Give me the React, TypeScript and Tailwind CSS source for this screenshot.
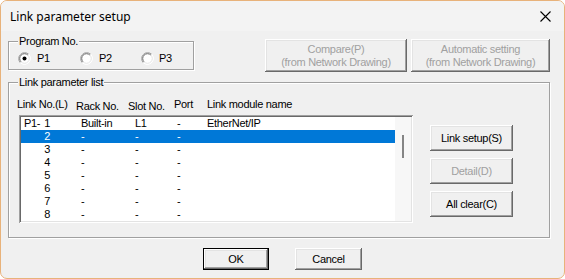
import React from "react";

const btn =
  "bg-[#f0f0f0] shadow-[inset_-1px_-1px_#696969,inset_1px_1px_#ffffff,inset_-2px_-2px_#a0a0a0,inset_2px_2px_#e3e3e3] flex flex-col items-center justify-center text-[11px] leading-[13px]";

function Radio({ checked }: { checked?: boolean }) {
  return (
    <svg width="13" height="13" viewBox="0 0 13 13">
      <circle cx="6.5" cy="6.5" r="6" fill="#ffffff" />
      <path d="M2.26 10.74 A6 6 0 0 1 10.74 2.26" stroke="#a0a0a0" strokeWidth="1" fill="none" />
      <path d="M3.1 9.9 A4.8 4.8 0 0 1 9.9 3.1" stroke="#696969" strokeWidth="1" fill="none" />
      <path d="M10.74 2.26 A6 6 0 0 1 2.26 10.74" stroke="#ffffff" strokeWidth="1" fill="none" />
      <path d="M9.9 3.1 A4.8 4.8 0 0 1 3.1 9.9" stroke="#e3e3e3" strokeWidth="1" fill="none" />
      {checked && <circle cx="6.5" cy="6.5" r="2" fill="#000" />}
    </svg>
  );
}

const rows = [
  { n: "1", p: "P1-", rack: "Built-in", slot: "L1", port: "-", name: "EtherNet/IP" },
  { n: "2", rack: "-", slot: "-", port: "-", name: "" },
  { n: "3", rack: "-", slot: "-", port: "-", name: "" },
  { n: "4", rack: "-", slot: "-", port: "-", name: "" },
  { n: "5", rack: "-", slot: "-", port: "-", name: "" },
  { n: "6", rack: "-", slot: "-", port: "-", name: "" },
  { n: "7", rack: "-", slot: "-", port: "-", name: "" },
  { n: "8", rack: "-", slot: "-", port: "-", name: "" },
];

export default function App() {
  return (
    <div className="w-[565px] h-[279px] border border-[#e8b27a] rounded-[7px] bg-[#f0f0f0] overflow-hidden flex flex-col font-['Liberation_Sans',Arial,sans-serif] text-black">
      {/* Title bar */}
      <div className="h-[30px] shrink-0 bg-[#f3f3f3] flex items-center justify-between pl-[9px] pr-[13px]">
        <span className="text-[12px] font-['Noto_Sans',sans-serif] pt-[1px]">Link parameter setup</span>
        <svg width="11" height="11" viewBox="0 0 11 11">
          <path d="M0.5 0.5 L10.5 10.5 M10.5 0.5 L0.5 10.5" stroke="#000" strokeWidth="1.1" />
        </svg>
      </div>

      {/* Body */}
      <div className="flex-1 flex flex-col pl-[7px] text-[11px] leading-[13px] tracking-[-0.3px]">
        {/* Row 1 */}
        <div className="flex items-start mt-[8px]">
          <div className="relative mt-[2px] w-[186px] h-[29px] border border-[#a0a0a0] shadow-[1px_1px_#ffffff,inset_1px_1px_#ffffff]">
            <span className="absolute -top-[7px] left-[9px] px-[1px] bg-[#f0f0f0]">Program No.</span>
            <div className="flex items-center h-full pt-[6px] pl-[9px]">
              <div className="flex items-center w-[62px]">
                <Radio checked />
                <span className="ml-[6px]">P1</span>
              </div>
              <div className="flex items-center w-[61px]">
                <Radio />
                <span className="ml-[6px]">P2</span>
              </div>
              <div className="flex items-center">
                <Radio />
                <span className="ml-[5px]">P3</span>
              </div>
            </div>
          </div>
          <div className={`${btn} ml-[71px] w-[142px] h-[33px] text-[#a0a0a0]`}>
            <span>Compare(P)</span>
            <span>(from Network Drawing)</span>
          </div>
          <div className={`${btn} ml-[4px] w-[139px] h-[33px] text-[#a0a0a0]`}>
            <span>Automatic setting</span>
            <span>(from Network Drawing)</span>
          </div>
        </div>

        {/* Link parameter list group */}
        <div className="relative mt-[10px] w-[542px] h-[156px] border border-[#a0a0a0] shadow-[1px_1px_#ffffff,inset_1px_1px_#ffffff] pt-[15px] pl-[10px]">
          <span className="absolute -top-[7px] left-[9px] px-[1px] bg-[#f0f0f0]">Link parameter list</span>
          <div className="flex h-[13px] -ml-[2px] mb-[4px]">
            <span className="w-[59px]">Link No.(L)</span>
            <span className="w-[52px] pt-[2px]">Rack No.</span>
            <span className="w-[46px] pt-[2px]">Slot No.</span>
            <span className="w-[33px]">Port</span>
            <span>Link module name</span>
          </div>
          <div className="flex items-start">
            <div className="w-[394px] h-[108px] p-[2px] bg-white shadow-[inset_1px_1px_#a0a0a0,inset_-1px_-1px_#ffffff,inset_2px_2px_#696969,inset_-2px_-2px_#e3e3e3] flex">
              <div className="w-[374px] flex flex-col">
                {rows.map((r, i) => (
                  <div
                    key={r.n}
                    className={`flex h-[13px] items-center ${i === 1 ? "bg-[#0078d7] text-white" : ""}`}
                  >
                    <span className="w-[30px] flex justify-between pl-[3px] pr-[1px]">
                      <span>{r.p ?? ""}</span>
                      <span>{r.n}</span>
                    </span>
                    <span className="ml-[30px] w-[54px]">{r.rack}</span>
                    <span className="w-[42px]">{r.slot}</span>
                    <span className="w-[30px]">{r.port}</span>
                    <span>{r.name}</span>
                  </div>
                ))}
              </div>
              <div className="flex-1 bg-[#f7f7f7] relative">
                <div className="absolute left-[7px] top-[18px] w-[2px] h-[23px] bg-[#858585]" />
              </div>
            </div>
            <div className="ml-[17px] mt-[10px] flex flex-col gap-[7px]">
              <div className={`${btn} w-[83px] h-[26px]`}>Link setup(S)</div>
              <div className={`${btn} w-[83px] h-[26px] text-[#a0a0a0]`}>Detail(D)</div>
              <div className={`${btn} w-[83px] h-[26px]`}>All clear(C)</div>
            </div>
          </div>
        </div>

        {/* Bottom buttons */}
        <div className="flex justify-center gap-[26px] mt-[10px] pr-[7px]">
          <div className={`${btn} w-[66px] h-[22px] border border-black`}>OK</div>
          <div className={`${btn} w-[67px] h-[22px]`}>Cancel</div>
        </div>
      </div>
    </div>
  );
}
